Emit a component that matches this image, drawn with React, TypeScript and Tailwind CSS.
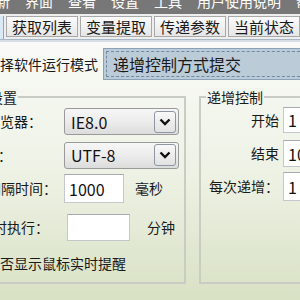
import React from 'react'

const font = { fontFamily: '"Noto Sans CJK SC", "Noto Sans", sans-serif' }

function Chevron() {
  return (
    <svg width="12" height="8" viewBox="0 0 12 8">
      <path d="M1.5 1.5 L6 6 L10.5 1.5" fill="none" stroke="#111" strokeWidth="2.4" />
    </svg>
  )
}

function Select({ value }: { value: string }) {
  return (
    <div className="w-[115px] h-[27px] flex items-center justify-between pl-[6px] pr-[2px] rounded-[3px] border border-[#9a9a9a] bg-gradient-to-b from-[#f6f6f6] via-[#ececec] to-[#dcdcdc]">
      <span className="text-[16px] text-[#111] leading-none">{value}</span>
      <div className="w-[22px] h-[22px] flex items-center justify-center rounded-[3px] border border-[#8c97a3] bg-gradient-to-b from-[#f8f8f8] to-[#e2e2e2]">
        <Chevron />
      </div>
    </div>
  )
}

function Input({ value, w, h }: { value?: string; w: string; h: string }) {
  return (
    <div className={`${w} ${h} flex items-center px-[4px] bg-white border border-[#c4c8cc] border-t-[#a6abb2] text-[16px] text-[#111] leading-none`}>
      {value}
    </div>
  )
}

export default function App() {
  const menus = ['刷新', '界面', '查看', '设置', '工具', '用户使用说明', '帮助']
  const tabs = ['获取列表', '变量提取', '传递参数', '当前状态']

  return (
    <div className="w-[300px] h-[300px] overflow-hidden flex flex-col text-[#1a1a1a]" style={font}>
      {/* menu bar, cut at the top */}
      <div className="h-[14px] shrink-0 bg-[#777777] overflow-hidden">
        <div className="flex gap-[15px] -ml-[18px] -mt-[9px] text-white text-[14px] leading-[20px] whitespace-nowrap">
          {menus.map((m) => (
            <span key={m}>{m}</span>
          ))}
        </div>
      </div>

      {/* tab strip */}
      <div className="h-[26px] shrink-0 bg-[#eeeeee] flex items-end gap-[2px] border-b border-[#a9b6c4]">
        <div className="w-[5px] h-[23px] bg-[#dbe8f5] border-r border-[#8fa6bd]" />
        {tabs.map((t) => (
          <div
            key={t}
            className="w-[72px] shrink-0 h-[21px] mb-[2px] flex items-center justify-center border border-[#a8a8a8] bg-gradient-to-b from-[#fbfbfb] to-[#e6e6e6] text-[15px] leading-none"
          >
            {t}
          </div>
        ))}
      </div>

      {/* page */}
      <div className="flex-1 flex flex-col bg-gradient-to-b from-[#f9faf7] via-[#eef2e5] to-[#d8e1c4] border-t-2 border-[#d7dde6]">
        {/* mode row */}
        <div className="flex items-center mt-[6px] h-[32px]">
          <div className="w-[98px] shrink-0 flex justify-end overflow-hidden whitespace-nowrap text-[14px]">
            选择软件运行模式
          </div>
          <div className="ml-[5px] w-[210px] shrink-0 h-[32px] p-[2px] bg-[#bccbd8] border border-[#8aa2b8]">
            <div className="h-full flex items-center pl-[6px] border border-dashed border-[#6f8aa3] text-[16px] leading-none whitespace-nowrap">
              递增控制方式提交
            </div>
          </div>
        </div>

        {/* groups */}
        <div className="flex mt-[16px] h-[188px]">
          {/* left group */}
          <div className="relative -ml-[30px] w-[216px] shrink-0 border-[2px] border-[#c8ccc4] pt-[10px]">
            <div className="absolute -top-[10px] left-[16px] px-[1px] text-[14px] leading-[18px] bg-[#f2f4ee]">设置</div>
            <div className="flex flex-col">
              <div className="flex items-center h-[27px]">
                <div className="w-[70px] shrink-0 flex justify-end text-[14px] whitespace-nowrap overflow-hidden">浏览器：</div>
                <div className="ml-[22px]"><Select value="IE8.0" /></div>
              </div>
              <div className="flex items-center h-[28px] mt-[6px]">
                <div className="w-[40px] shrink-0 flex justify-end text-[14px] whitespace-nowrap overflow-hidden">编码：</div>
                <div className="ml-[52px]"><Select value="UTF-8" /></div>
              </div>
              <div className="flex items-center h-[29px] mt-[5px]">
                <div className="w-[85px] shrink-0 flex justify-end text-[14px] whitespace-nowrap overflow-hidden">间隔时间：</div>
                <div className="ml-[7px]"><Input value="1000" w="w-[60px]" h="h-[29px]" /></div>
                <span className="ml-[11px] text-[14px]">毫秒</span>
              </div>
              <div className="flex items-center h-[27px] mt-[11px]">
                <div className="w-[77px] shrink-0 flex justify-end text-[14px] whitespace-nowrap overflow-hidden">定时执行：</div>
                <div className="ml-[18px]"><Input w="w-[63px]" h="h-[27px]" /></div>
                <span className="ml-[17px] text-[14px]">分钟</span>
              </div>
              <div className="ml-[14px] mt-[12px] text-[14px] whitespace-nowrap">是否显示鼠标实时提醒</div>
            </div>
          </div>

          {/* right group */}
          <div className="relative ml-[13px] w-[130px] shrink-0 border-[2px] border-[#c8ccc4] pt-[9px]">
            <div className="absolute -top-[10px] left-[5px] px-[1px] text-[14px] leading-[18px] bg-[#f2f4ee]">递增控制</div>
            <div className="flex flex-col">
              <div className="flex items-center h-[26px]">
                <div className="w-[78px] shrink-0 flex justify-end text-[14px]">开始</div>
                <div className="ml-[4px]"><Input value="1" w="w-[40px]" h="h-[26px]" /></div>
              </div>
              <div className="flex items-center h-[27px] mt-[7px]">
                <div className="w-[78px] shrink-0 flex justify-end text-[14px]">结束</div>
                <div className="ml-[4px]"><Input value="10" w="w-[40px]" h="h-[27px]" /></div>
              </div>
              <div className="flex items-center h-[29px] mt-[5px]">
                <div className="w-[78px] shrink-0 flex justify-end text-[14px] whitespace-nowrap">每次递增：</div>
                <div className="ml-[4px]"><Input value="1" w="w-[40px]" h="h-[29px]" /></div>
              </div>
            </div>
          </div>
        </div>
      </div>
    </div>
  )
}
